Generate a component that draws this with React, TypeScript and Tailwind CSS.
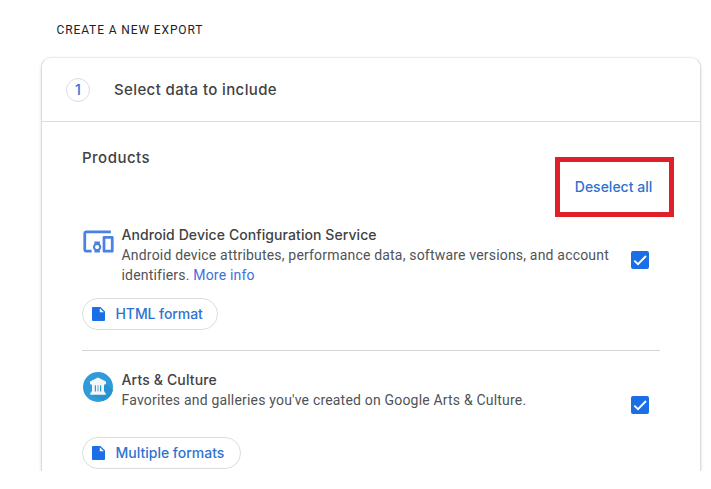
import type { ReactNode } from "react";

const heading = "font-['Inter','Open_Sans',sans-serif] font-[480] text-[#3f4245] whitespace-nowrap";
const action = "font-['Inter','Open_Sans',sans-serif] font-medium text-[#2f72d0] whitespace-nowrap";

function DevicesIcon() {
  return (
    <svg viewBox="0 0 24 24" className="size-[33px] shrink-0" fill="#4a82e4">
      <path d="M3 6h18V4H3c-1.1 0-2 .9-2 2v12c0 1.1.9 2 2 2h4v-2H3V6zm10 6H9v1.78c-.61.55-1 1.33-1 2.22s.39 1.67 1 2.22V20h4v-1.78c.61-.55 1-1.34 1-2.22s-.39-1.67-1-2.22V12zm-2 5.5c-.83 0-1.5-.67-1.5-1.5s.67-1.5 1.5-1.5 1.5.67 1.5 1.5-.67 1.5-1.5 1.5zM22 8h-6c-.5 0-1 .5-1 1v10c0 .5.5 1 1 1h6c.5 0 1-.5 1-1V9c0-.5-.5-1-1-1zm-1 10h-4v-8h4v8z" />
    </svg>
  );
}

function MuseumIcon() {
  return (
    <svg viewBox="0 0 30 30" className="size-[30px] shrink-0">
      <circle cx="15" cy="15" r="15" fill="#2f9bd8" />
      <path d="M23 12l7 6a15 15 0 0 1-10 11L8 22z" fill="#2a92d0" />
      <path
        fill="#f4f7f9"
        fillRule="evenodd"
        d="M15 5.500 7 9.600v2.600h1.500v1h.5v6.300h-.7v1.200h-1v2.100h15.400v-2.100h-1v-1.200H21v-6.300h.5v-1H23V9.600zM11.800 13.200h1.200v6.300h-1.200zM14.600 13.200h.8v6.300h-.8zM17 13.200h1.200v6.300H17z"
      />
    </svg>
  );
}

function Checkbox() {
  return (
    <span className="flex size-[18px] shrink-0 items-center justify-center rounded-[2px] bg-[#1a6fe6]">
      <svg viewBox="0 0 18 18" className="size-[18px]" fill="none" stroke="#fff" strokeWidth="1.900">
        <path d="M3.300 9.600 7 13.200 15 5" />
      </svg>
    </span>
  );
}

function FormatButton({ label, className }: { label: string; className: string }) {
  return (
    <button className={`flex h-8 items-center rounded-full border border-[#dadce0] pl-[9px] ${className}`}>
      <svg viewBox="0 0 13 14" className="h-[14px] w-[13px] shrink-0" fill="#1a6fe6">
        <path fillRule="evenodd" d="M1 0H8.500L13 4.500V13a1 1 0 0 1-1 1H1a1 1 0 0 1-1-1V1A1 1 0 0 1 1 0zM7.800 1.200V5.200H11.900z" />
      </svg>
      <span className={`ml-[10.500px] pb-px text-sm ${action}`}>{label}</span>
    </button>
  );
}

function Product({ icon, title, children }: { icon: ReactNode; title: ReactNode; children: ReactNode }) {
  return (
    <div className="flex">
      <div className="w-[39.500px] shrink-0">{icon}</div>
      <div className="w-[509.500px] shrink-0">
        {title}
        <p className="font-[Roboto,sans-serif] text-sm leading-5 tracking-[0.190px] whitespace-nowrap text-[#505357]">{children}</p>
      </div>
      <div className="mt-[26px]">
        <Checkbox />
      </div>
    </div>
  );
}

export default function App() {
  return (
    <div className="h-[489px] w-[711px] bg-white">
      <div className="h-[471px] overflow-hidden">
        <h1 className="pt-5 pl-[56.500px] font-[Roboto,sans-serif] text-xs leading-5 font-[450] tracking-[0.880px] text-[#202124]">
          CREATE A NEW EXPORT
        </h1>
        <main className="mt-[17px] ml-[41px] h-[460px] w-[660px] rounded-[10px] border border-[#dadce0] border-t-[#ebecee] shadow-[0_1px_3px_rgba(60,64,67,0.180)]">
          <header className="flex h-16 items-center border-b border-[#dadce0] pl-6">
            <span className={`flex size-6 items-center justify-center rounded-full border border-[#d5dcef] text-sm ${action}`}>1</span>
            <h2 className={`mt-px ml-6 text-[15px] tracking-[0.380px] ${heading}`}>Select data to include</h2>
          </header>
          <section className="px-10">
            <div className="flex h-[103px] justify-between">
              <h3 className={`mt-[26px] text-[15px] leading-5 tracking-[0.480px] ${heading}`}>Products</h3>
              <button className={`mt-[35px] -mr-[14px] flex h-[60px] w-[119px] items-center justify-center border-[5px] border-[#df2029] pr-[2px] text-sm ${action}`}>
                Deselect all
              </button>
            </div>
            <Product
              icon={<DevicesIcon />}
              title={<h4 className={`text-sm leading-5 tracking-[0.080px] ${heading}`}>Android Device Configuration Service</h4>}
            >
              Android device attributes, performance data, software versions, and account
              <br />
              identifiers. <a className="text-[#3f70dc]">More info</a>
            </Product>
            <FormatButton label="HTML format" className="mt-[13px] w-[136px] tracking-[-0.080px]" />
            <hr className="mt-5 border-[#d4d6d9]" />
            <div className="mt-[19px]">
              <Product
                icon={<div className="pt-[2px] pl-px"><MuseumIcon /></div>}
                title={<h4 className={`text-sm leading-5 tracking-[0.150px] ${heading}`}>Arts &amp; Culture</h4>}
              >
                Favorites and galleries you've created on Google Arts &amp; Culture.
              </Product>
            </div>
            <FormatButton label="Multiple formats" className="mt-[23px] w-[159px]" />
          </section>
        </main>
      </div>
    </div>
  );
}
